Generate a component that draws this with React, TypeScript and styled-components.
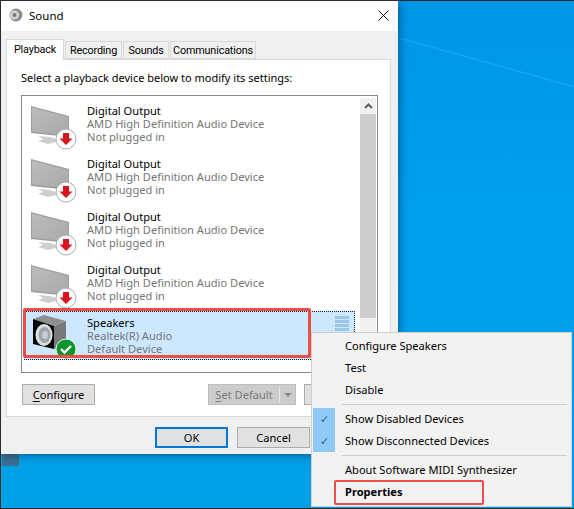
import React from "react";
import styled, { createGlobalStyle } from "styled-components";

const devices = [
  { name: "Digital Output", driver: "AMD High Definition Audio Device", status: "Not plugged in" },
  { name: "Digital Output", driver: "AMD High Definition Audio Device", status: "Not plugged in" },
  { name: "Digital Output", driver: "AMD High Definition Audio Device", status: "Not plugged in" },
  { name: "Digital Output", driver: "AMD High Definition Audio Device", status: "Not plugged in" },
];

const MonitorIcon = () => (
  <svg width="48" height="47" viewBox="0 0 48 47">
    <defs>
      <linearGradient id="screen" x1="0" y1="0" x2="1" y2="1">
        <stop offset="0" stopColor="#bcbcbc" />
        <stop offset="1" stopColor="#a9a9a9" />
      </linearGradient>
    </defs>
    <polygon points="8,33 20,34 26,36 26,39 18,41 8,38 13,36" fill="#cfcfcf" />
    <polygon points="1,3 39,13 39,34 1,30" fill="#9d9d9d" />
    <polygon points="2,4.500 38,14 38,32.500 2,28.500" fill="url(#screen)" />
    <circle cx="36" cy="36" r="10" fill="#fff" stroke="#adadad" />
    <polygon points="33,30 39,30 39,35.500 42.500,35.500 36,42 29.500,35.500 33,35.500" fill="#d9161e" />
  </svg>
);

const SpeakerIcon = () => (
  <svg width="48" height="46" viewBox="0 0 48 46">
    <polygon points="3,4 14,0 36,6 24,11" fill="#8f8f8f" />
    <polygon points="24,11 36,6 36,29 24,34" fill="#77797c" />
    <polygon points="3,4 24,11 24,34 3,29" fill="#070707" />
    <ellipse cx="14" cy="20" rx="8.500" ry="11" fill="#dde0e0" />
    <ellipse cx="14.500" cy="20" rx="6" ry="8" fill="#9ca6aa" />
    <ellipse cx="15" cy="20" rx="3" ry="4" fill="#c6cccf" />
    <circle cx="36" cy="34" r="10" fill="#0a962e" stroke="#eaf6ea" />
    <path d="M31 34l3.500 3.500 6.500-6.500" fill="none" stroke="#fff" strokeWidth="2.400" />
  </svg>
);

const App = () => (
  <Desktop>
    <GlobalStyle />
    <Beam viewBox="0 0 176 60" width="176" height="60">
      <path d="M0 0 L176 49" stroke="#12a5f0" strokeWidth="1.500" fill="none" />
    </Beam>
    <TaskbarTile />
    <Dialog>
      <TitleBar>
        <svg width="14" height="14" viewBox="0 0 14 14">
          <circle cx="7" cy="7" r="6.500" fill="#8e8e8e" />
          <circle cx="5.500" cy="7" r="4.500" fill="#d4d4d4" />
          <circle cx="5.500" cy="7" r="2" fill="#777" />
        </svg>
        <DialogTitle>Sound</DialogTitle>
        <svg width="11" height="11" viewBox="0 0 11 11">
          <path d="M0.500 0.500l10 10M10.500 0.500l-10 10" stroke="#111" strokeWidth="1" />
        </svg>
      </TitleBar>
      <Body>
        <Tabs>
          <Tab $active $width={58}>
            Playback
          </Tab>
          <Tab $width={57}>Recording</Tab>
          <Tab $width={46}>Sounds</Tab>
          <Tab $width={86}>Communications</Tab>
        </Tabs>
        <Page>
          <Hint>Select a playback device below to modify its settings:</Hint>
          <ListBox>
            <Rows>
              {devices.map((d, i) => (
                <Row key={i}>
                  <IconSlot>
                    <MonitorIcon />
                  </IconSlot>
                  <RowText>
                    <DeviceName>{d.name}</DeviceName>
                    <DeviceInfo>{d.driver}</DeviceInfo>
                    <DeviceInfo>{d.status}</DeviceInfo>
                  </RowText>
                </Row>
              ))}
              <Row $selected>
                <IconSlot>
                  <SpeakerIcon />
                </IconSlot>
                <RowText>
                  <DeviceName>Speakers</DeviceName>
                  <DeviceInfo>Realtek(R) Audio</DeviceInfo>
                  <DeviceInfo>Default Device</DeviceInfo>
                </RowText>
                <LevelBars>
                  {[0, 1, 2, 3, 4].map(n => (
                    <LevelBar key={n} />
                  ))}
                </LevelBars>
              </Row>
            </Rows>
            <ScrollBar>
              <ScrollArrow>
                <svg width="9" height="6" viewBox="0 0 9 6">
                  <path d="M1 5l3.500-3.500L8 5" fill="none" stroke="#606060" strokeWidth="2" />
                </svg>
              </ScrollArrow>
              <ScrollThumb />
            </ScrollBar>
          </ListBox>
          <PageButtons>
            <Button $width={73}>
              <u>C</u>onfigure
            </Button>
            <RightButtons>
              <SplitButton>
                <SplitLabel>
                  <u>S</u>et Default
                </SplitLabel>
                <SplitArrow />
              </SplitButton>
              <Button $width={73} />
            </RightButtons>
          </PageButtons>
        </Page>
        <DialogButtons>
          <Button $width={73} $default>
            OK
          </Button>
          <Button $width={73}>Cancel</Button>
          <Button $width={73} />
        </DialogButtons>
      </Body>
    </Dialog>

    <RowMark />
    <Menu>
      <MenuItem>Configure Speakers</MenuItem>
      <MenuItem>Test</MenuItem>
      <MenuItem>Disable</MenuItem>
      <Separator />
      <MenuItem $checked>Show Disabled Devices</MenuItem>
      <MenuItem $checked>Show Disconnected Devices</MenuItem>
      <Separator />
      <MenuItem>About Software MIDI Synthesizer</MenuItem>
      <MenuItem $bold>Properties</MenuItem>
    </Menu>
    <PropertiesMark />
  </Desktop>
);

const GlobalStyle = createGlobalStyle`
  html, body {
    margin: 0;
    padding: 0;
    background: #00a0ec;
  }
  body {
    font-family: "Noto Sans", "Open Sans", sans-serif;
    font-size: 11.100px;
  }
`;

const Desktop = styled.div`
  position: relative;
  width: 574px;
  height: 509px;
  box-sizing: border-box;
  overflow: hidden;
  border: 1px solid #2b2b2b;
  border-right: 0;
  background: linear-gradient(180deg, #0096e8 0%, #009fee 45%, #00a0e6 100%);
`;

const Beam = styled.svg`
  position: absolute;
  left: 398px;
  top: 37px;
`;

const TaskbarTile = styled.div`
  position: absolute;
  left: 1px;
  top: 453px;
  width: 17px;
  height: 12px;
  background: #3c6f92;
`;

const Dialog = styled.div`
  position: relative;
  width: 397px;
  height: 453px;
  box-sizing: border-box;
  background: #f0f0f0;
  color: #000;
  box-shadow: 2px 2px 8px rgba(0, 30, 70, 0.45);
`;

const TitleBar = styled.div`
  box-sizing: border-box;
  height: 30px;
  display: flex;
  align-items: center;
  gap: 6px;
  padding: 0 9px 2px 8px;
  background: #fff;
`;

const DialogTitle = styled.div`
  font-size: 11.500px;
  flex: 1;
`;

const Body = styled.div`
  padding: 7px 7px 0 5px;
`;

const Tabs = styled.div`
  display: flex;
  align-items: flex-end;
  height: 21px;
  position: relative;
  z-index: 1;
`;

const Tab = styled.div<{ $active?: boolean; $width: number }>`
  box-sizing: border-box;
  width: ${p => p.$width}px;
  height: ${p => (p.$active ? "21px" : "18px")};
  margin-bottom: ${p => (p.$active ? "-1px" : "0")};
  margin-left: ${p => (p.$active ? "0" : "1px")};
  padding-bottom: ${p => (p.$active ? "2px" : "0")};
  display: flex;
  align-items: center;
  justify-content: center;
  background: ${p => (p.$active ? "#fff" : "#f0f0f0")};
  border: 1px solid #d9d9d9;
  border-bottom: ${p => (p.$active ? "0" : "1px solid #d9d9d9")};
  font-family: Roboto, "Noto Sans", sans-serif;
  font-size: 10.800px;
  letter-spacing: -0.150px;
`;

const Page = styled.div`
  box-sizing: border-box;
  width: 385px;
  height: 358px;
  padding: 10px 12px 0 14px;
  background: #fff;
  border: 1px solid #d9d9d9;
`;

const Hint = styled.div`
  height: 25px;
  line-height: 16px;
  font-size: 11px;
`;

const ListBox = styled.div`
  box-sizing: border-box;
  display: flex;
  width: 357px;
  height: 278px;
  border: 1px solid #828790;
  padding: 2px 1px 0 2px;
  background: #fff;
`;

const Rows = styled.div`
  width: 332px;
  padding-top: 1px;
  display: flex;
  flex-direction: column;
  gap: 4px;
`;

const Row = styled.div<{ $selected?: boolean }>`
  box-sizing: border-box;
  height: 49px;
  display: flex;
  align-items: flex-start;
  padding: 3px 0 0 6px;
  background: ${p => (p.$selected ? "#cce8ff" : "transparent")};
  outline: ${p => (p.$selected ? "1px dotted #222" : "none")};
  outline-offset: -1px;
  position: relative;
`;

const IconSlot = styled.div`
  width: 57px;
  height: 46px;
  flex: none;
  margin-top: 1px;
`;

const RowText = styled.div`
  flex: 1;
  line-height: 13px;
  padding-top: 2px;
`;

const DeviceName = styled.div`
  color: #000;
`;

const DeviceInfo = styled.div`
  color: #767676;
`;

const LevelBars = styled.div`
  position: absolute;
  right: 6px;
  top: 5px;
  display: flex;
  flex-direction: column;
  gap: 1px;
`;

const LevelBar = styled.div`
  width: 14px;
  height: 3px;
  background: #9ac6e8;
`;

const ScrollBar = styled.div`
  width: 16px;
  margin-left: 5px;
  height: 100%;
  background: #f0f0f0;
  display: flex;
  flex-direction: column;
`;

const ScrollArrow = styled.div`
  height: 16px;
  display: flex;
  align-items: center;
  justify-content: center;
`;

const ScrollThumb = styled.div`
  height: 204px;
  background: #cdcdcd;
`;

const PageButtons = styled.div`
  display: flex;
  justify-content: space-between;
  margin-top: 11px;
  padding-left: 1px;
`;

const RightButtons = styled.div`
  display: flex;
  gap: 8px;
  margin-right: 1px;
`;

const Button = styled.div<{ $width: number; $default?: boolean }>`
  box-sizing: border-box;
  width: ${p => p.$width}px;
  height: 21px;
  display: flex;
  align-items: center;
  justify-content: center;
  white-space: pre;
  background: #e1e1e1;
  color: #000;
  border: ${p => (p.$default ? "2px solid #0078d7" : "1px solid #adadad")};
  u {
    text-underline-offset: 2px;
  }
`;

const SplitButton = styled.div`
  box-sizing: border-box;
  width: 88px;
  height: 21px;
  display: flex;
  align-items: center;
  background: #cccccc;
  border: 1px solid #bfbfbf;
  color: #7a7a7a;
`;

const SplitLabel = styled.div`
  flex: 1;
  text-align: center;
  white-space: pre;
  border-right: 1px solid #e8e8e8;
  u {
    text-underline-offset: 2px;
  }
`;

const SplitArrow = styled.div`
  width: 15px;
  height: 100%;
  display: flex;
  align-items: center;
  justify-content: center;
  &::after {
    content: "";
    border-left: 4px solid transparent;
    border-right: 4px solid transparent;
    border-top: 4px solid #8a8a8a;
  }
`;

const DialogButtons = styled.div`
  display: flex;
  justify-content: flex-end;
  gap: 9px;
  padding: 10px 0 0;
  width: 386px;
`;

const RowMark = styled.div`
  position: absolute;
  left: 22px;
  top: 307px;
  width: 288px;
  height: 50px;
  box-sizing: border-box;
  border: 3px solid #ea4e47;
  border-radius: 2px;
`;

const Menu = styled.div`
  position: absolute;
  left: 310px;
  top: 331px;
  width: 261px;
  height: 175px;
  box-sizing: border-box;
  padding: 2px;
  background: #f2f2f2;
  border: 1px solid #cfcfcf;
`;

const MenuItem = styled.div<{ $checked?: boolean; $bold?: boolean }>`
  position: relative;
  height: 22px;
  line-height: 22px;
  padding-left: 31px;
  color: #000;
  font-weight: ${p => (p.$bold ? 700 : 400)};
  &::before {
    content: "${p => (p.$checked ? "✓" : "")}";
    position: absolute;
    left: -1px;
    top: 0;
    width: 22px;
    height: 22px;
    text-align: center;
    color: #3d5a74;
    background: ${p => (p.$checked ? "#90c8f6" : "transparent")};
  }
`;

const Separator = styled.div`
  height: 1px;
  margin: 3px 2px 3px 28px;
  background: #cfcfcf;
`;

const PropertiesMark = styled.div`
  position: absolute;
  left: 333px;
  top: 479px;
  width: 150px;
  height: 25px;
  box-sizing: border-box;
  border: 2px solid #ea4e47;
  border-radius: 2px;
`;

export default App;
